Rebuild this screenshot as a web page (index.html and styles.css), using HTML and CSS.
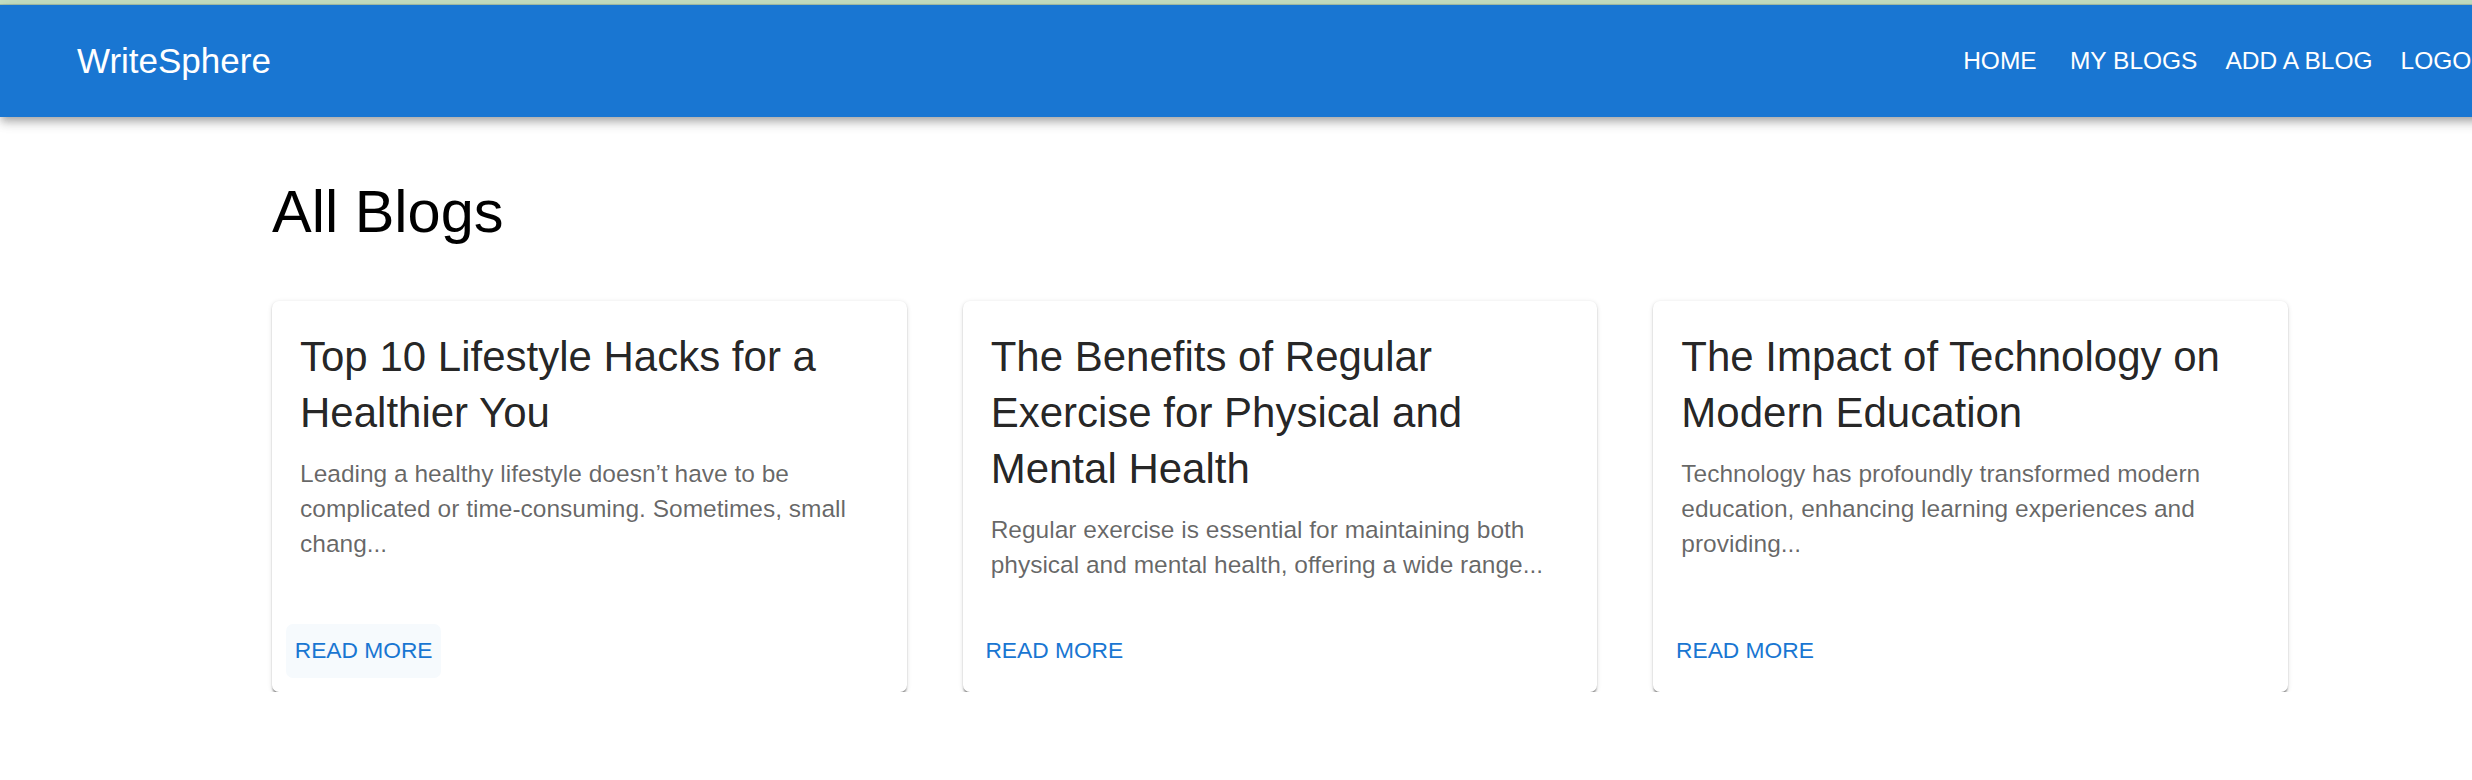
FILE: index.html
```html
<!DOCTYPE html>
<html lang="en">
<head>
<meta charset="utf-8">
<title>WriteSphere</title>
<link rel="stylesheet" href="styles.css">
</head>
<body>
<div class="topstrip"></div>
<div class="page">
  <header class="appbar">
    <div class="brand">WriteSphere</div>
    <nav class="nav">
      <a class="nav-btn">HOME</a>
      <a class="nav-btn">MY BLOGS</a>
      <a class="nav-btn">ADD A BLOG</a>
      <a class="nav-btn">LOGOUT</a>
    </nav>
  </header>
  <main class="container">
    <h1 class="heading">All Blogs</h1>
    <div class="grid">
      <article class="card">
        <div class="card-content">
          <h2 class="card-title">Top 10 Lifestyle Hacks for a Healthier You</h2>
          <p class="card-text">Leading a healthy lifestyle doesn’t have to be complicated or time-consuming. Sometimes, small chang...</p>
        </div>
        <div class="card-actions"><a class="read-btn is-hover">READ MORE</a></div>
      </article>
      <article class="card">
        <div class="card-content">
          <h2 class="card-title">The Benefits of Regular Exercise for Physical and Mental Health</h2>
          <p class="card-text">Regular exercise is essential for maintaining both physical and mental health, offering a wide range...</p>
        </div>
        <div class="card-actions"><a class="read-btn">READ MORE</a></div>
      </article>
      <article class="card">
        <div class="card-content">
          <h2 class="card-title">The Impact of Technology on Modern Education</h2>
          <p class="card-text">Technology has profoundly transformed modern education, enhancing learning experiences and providing...</p>
        </div>
        <div class="card-actions"><a class="read-btn">READ MORE</a></div>
      </article>
    </div>
  </main>
</div>
</body>
</html>
```
FILE: styles.css
```css
html, body {
  margin: 0;
  padding: 0;
  overflow-x: hidden;
  background: #fff;
}
body {
  font-family: "Liberation Sans", Arial, sans-serif;
  color: rgba(0, 0, 0, 0.87);
}
.topstrip {
  height: 4px;
  background: #c6e1c3;
  border-bottom: 1px solid #a8c4ab;
}
.page {
  width: 2560px;
}
.appbar {
  height: 112px;
  background: #1976d2;
  color: #fff;
  display: flex;
  align-items: center;
  justify-content: space-between;
  padding: 0 42px;
  box-shadow: 0 3.5px 7px -1.75px rgba(0,0,0,0.2), 0 7px 8.75px 0 rgba(0,0,0,0.14), 0 1.75px 17.5px 0 rgba(0,0,0,0.12);
  position: relative;
  z-index: 1;
  box-sizing: border-box;
}
.brand {
  font-size: 35px;
  line-height: 56px;
  margin-left: 35px;
}
.nav {
  display: flex;
  align-items: center;
}
.nav-btn {
  font-size: 24.5px;
  line-height: 1.75;
  padding: 10.5px 14px;
  min-width: 112px;
  box-sizing: border-box;
  text-align: center;
  color: #fff;
  font-weight: 400;
  white-space: nowrap;
}
.container {
  width: 2016px;
  margin: 0 auto;
  padding-top: 58px;
}
.heading {
  margin: 0;
  font-size: 59.5px;
  line-height: 73.5px;
  font-weight: 400;
  color: #000;
}
.grid {
  margin-top: 52.5px;
  display: grid;
  grid-template-columns: repeat(3, 1fr);
  gap: 56px;
}
.card {
  background: #fff;
  border-radius: 7px;
  box-shadow: 0 3.5px 2px -1.5px rgba(0,0,0,0.28), 0 1.75px 1.75px 0 rgba(0,0,0,0.16), 0 1.75px 5.25px 0 rgba(0,0,0,0.12);
  display: flex;
  flex-direction: column;
}
.card-content {
  padding: 28px;
  flex: 1;
}
.card-title {
  margin: 0 0 14.7px;
  font-size: 42px;
  line-height: 56px;
  font-weight: 400;
  color: rgba(0, 0, 0, 0.87);
}
.card-text {
  margin: 0;
  font-size: 24.5px;
  line-height: 35px;
  color: rgba(0, 0, 0, 0.6);
}
.card-actions {
  padding: 14px;
  display: flex;
}
.read-btn {
  font-size: 22.75px;
  line-height: 1.75;
  padding: 7px 8.75px;
  border-radius: 7px;
  color: #1976d2;
}
.read-btn.is-hover {
  background: rgba(25, 118, 210, 0.04);
}
```
